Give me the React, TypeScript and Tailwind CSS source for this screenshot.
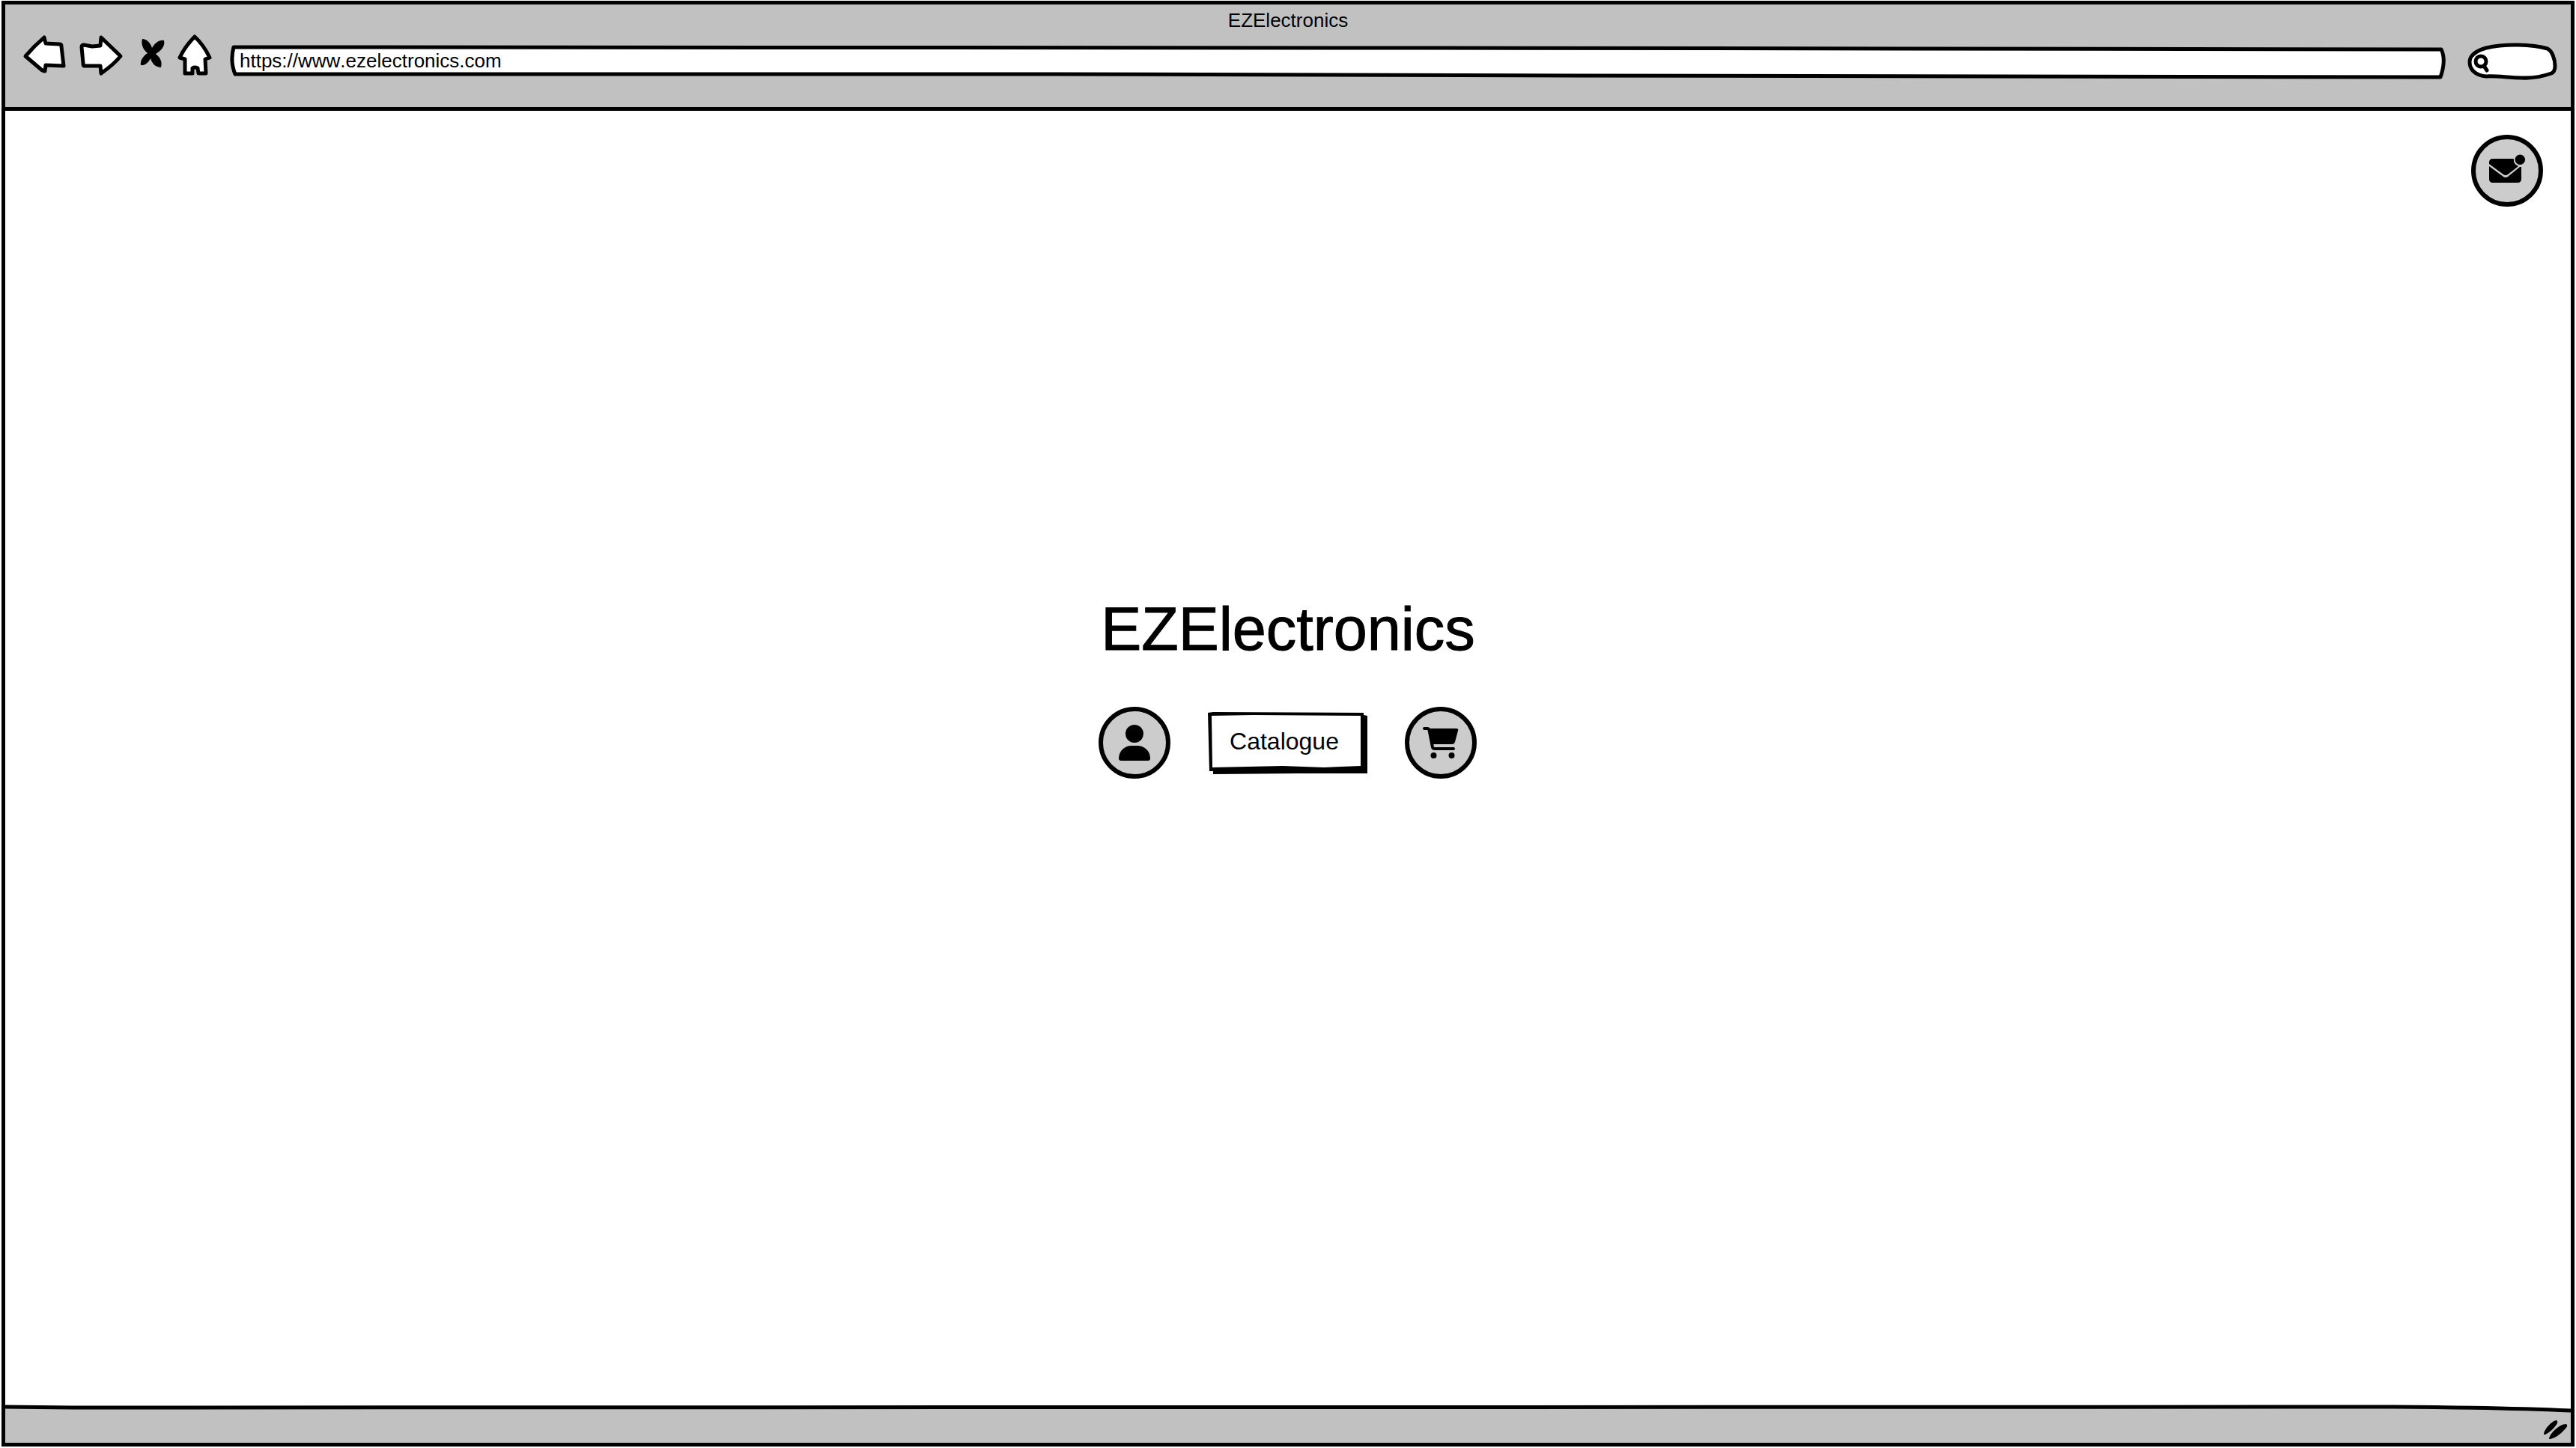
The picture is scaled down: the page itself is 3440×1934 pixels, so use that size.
import type { ReactNode } from "react";

const outline = {
  fill: "#fff",
  stroke: "#000",
  strokeWidth: 5,
  strokeLinejoin: "round",
  strokeLinecap: "round",
} as const;

function NavButton({ label, width, className, children }: { label: string; width: number; className: string; children: ReactNode }) {
  return (
    <button type="button" aria-label={label} className={`h-15 shrink-0 ${className}`}>
      <svg viewBox={`0 0 ${width} 60`} className="block h-full w-full">
        {children}
      </svg>
    </button>
  );
}

function RoundButton({ label, children }: { label: string; children: ReactNode }) {
  return (
    <button type="button" aria-label={label} className="size-24 shrink-0">
      <svg viewBox="0 0 96 96" className="block size-full">
        <circle cx="48" cy="48" r="45" fill="#ccc" stroke="#000" strokeWidth="6" />
        {children}
      </svg>
    </button>
  );
}

function BrowserHeader() {
  return (
    <header className="border-b-5 border-black bg-[#c1c1c1] pb-[31px]">
      <p className="h-[38px] pt-1.5 text-center text-[26px] leading-[30px] [font-kerning:none]">EZElectronics</p>
      <div className="flex items-start pr-[18px] pl-[23px]">
        <nav aria-label="Browser" className="flex gap-3">
          <NavButton label="Back" width={64} className="w-16">
            <path {...outline} d="M4 31L16 18L29 6L31 14L50 15Q52 15 52 18L55 44L31 43L30 51Q27 51 24 48Z" />
          </NavButton>
          <NavButton label="Forward" width={66} className="w-[66px]">
            <path {...outline} d="M3 19Q3 16 6 16L17 18L28 17L29 6L55 31Q46 42 29 54L28 44L6 44Q5 44 5 40Z" />
          </NavButton>
          <NavButton label="Stop" width={40} className="w-10">
            <path d="M6 8C12 8 17 13 19 20C23 13 29 9 35 10C37 17 31 24 24 28C30 33 33 38 31 46C24 46 19 41 17 34C14 40 9 44 4 43C3 37 7 31 13 27C7 22 4 15 6 8Z" />
          </NavButton>
          <NavButton label="Home" width={58} className="w-[58px]">
            <path {...outline} d="M24 5Q36 16 44 33L38 35L39 54L29 54L28 47Q24 45 21 47L21 54L11 54L11 35L4 33Q11 18 24 5Z" />
          </NavButton>
        </nav>
        <div className="relative mt-3 ml-3 h-14 flex-1">
          <svg viewBox="0 0 2961 56" preserveAspectRatio="none" className="absolute inset-0 size-full">
            <path {...outline} vectorEffect="non-scaling-stroke" d="M6 7L1600 8L2954 10Q2961 24 2953 47L1800 45L1100 43L8 43Q1 26 6 7Z" />
          </svg>
          <input
            type="text"
            aria-label="Address"
            defaultValue="https://www.ezelectronics.com"
            className="relative h-[50px] w-full bg-transparent pr-4 pl-3.5 text-[26px] outline-none [font-kerning:none]"
          />
        </div>
        <div className="relative mt-3 ml-7 h-14 w-30 shrink-0">
          <svg viewBox="0 0 120 56" className="absolute inset-0 size-full">
            <path {...outline} d="M25 46C11 45 3 37 3 27C3 18 11 12 25 8C50 2 87 3 107 9C113 12 117 23 117 32Q117 40 112 42Q92 49 73 48C55 48 40 45 25 46Z" />
            <circle cx="18" cy="26" r="7" fill="none" stroke="#000" strokeWidth="5" />
            <path d="M22 32L26 38" stroke="#000" strokeWidth="5" strokeLinecap="round" />
          </svg>
          <input type="search" aria-label="Search" className="relative h-[50px] w-full bg-transparent pr-3 pl-9 text-[26px] outline-none" />
        </div>
      </div>
    </header>
  );
}

function CatalogueButton() {
  return (
    <button type="button" className="relative h-[83px] w-[213px] text-[32px]">
      <svg viewBox="0 0 213 83" className="absolute inset-0 size-full">
        <path d="M0 1L7 0L208 1V4L213 5V82L120 82L7 83V79H2Z" />
        <path d="M5 5L60 4L204 5V72L155 74L100 72L6 74Z" fill="#fff" />
      </svg>
      <span className="relative block pr-2 pb-1">Catalogue</span>
    </button>
  );
}

function StatusBar() {
  return (
    <footer className="relative h-[51px]">
      <svg viewBox="0 0 3426 51" preserveAspectRatio="none" className="absolute inset-0 size-full">
        <path d="M0 3L90 4L3190 3Q3330 4 3426 8V51H0Z" fill="#c1c1c1" />
        <path d="M0 3L90 4L3190 3Q3330 4 3426 8" fill="none" stroke="#000" strokeWidth="5" vectorEffect="non-scaling-stroke" />
      </svg>
      <svg viewBox="0 0 32 26" className="absolute right-1 bottom-1 h-[26px] w-8">
        <path d="M0 19C0 13 10 1 17 0Q20 2 16 7Q10 15 2 19Z" />
        <path d="M7 25C7 19 20 5 30 5Q33 7 29 11C23 18 14 25 7 25Z" />
      </svg>
    </footer>
  );
}

export default function App() {
  return (
    <div className="flex min-h-screen bg-white px-0.5 pt-px pb-0.5 font-['Liberation_Sans',Arial,sans-serif] text-black">
      <div className="flex flex-1 flex-col border-5 border-black">
        <BrowserHeader />
        <main className="flex flex-1 flex-col">
          <div className="flex justify-end pt-8 pr-[37px]">
            <RoundButton label="Messages">
              <path d="M24 37Q24 32 29 32H57Q56 39 63 42L49 53Q46 55 43 53L24 39Z" />
              <path d="M24 42L43 56Q46 58 49 56L65 43H67V59Q67 64 62 64H29Q24 64 24 59Z" />
              <circle cx="65.300" cy="33.300" r="8.500" fill="#ccc" />
              <circle cx="65.300" cy="33.300" r="6.700" />
            </RoundButton>
          </div>
          <section className="flex flex-1 flex-col items-center justify-center pb-80">
            <h1 className="text-[81px] leading-24 [-webkit-text-stroke:1px_black]">EZElectronics</h1>
            <div className="mt-14 flex items-center gap-[50px] pr-0.5">
              <RoundButton label="Account">
                <circle cx="48" cy="36" r="12" />
                <path d="M27 69C27 59 35 52 44 52H52C61 52 69 59 69 69Q69 72 66 72H30Q27 72 27 69Z" />
              </RoundButton>
              <CatalogueButton />
              <RoundButton label="Cart">
                <path d="M26 29H30Q32 29 32.500 31L37 54Q37.500 56 40 56H65" fill="none" stroke="#000" strokeWidth="4" strokeLinecap="round" strokeLinejoin="round" />
                <path d="M31 29H69Q72 29 71 32L67 47Q66 50 63 50H36Z" />
                <circle cx="38.500" cy="65" r="4" />
                <circle cx="62.500" cy="65" r="4" />
              </RoundButton>
            </div>
          </section>
        </main>
        <StatusBar />
      </div>
    </div>
  );
}
